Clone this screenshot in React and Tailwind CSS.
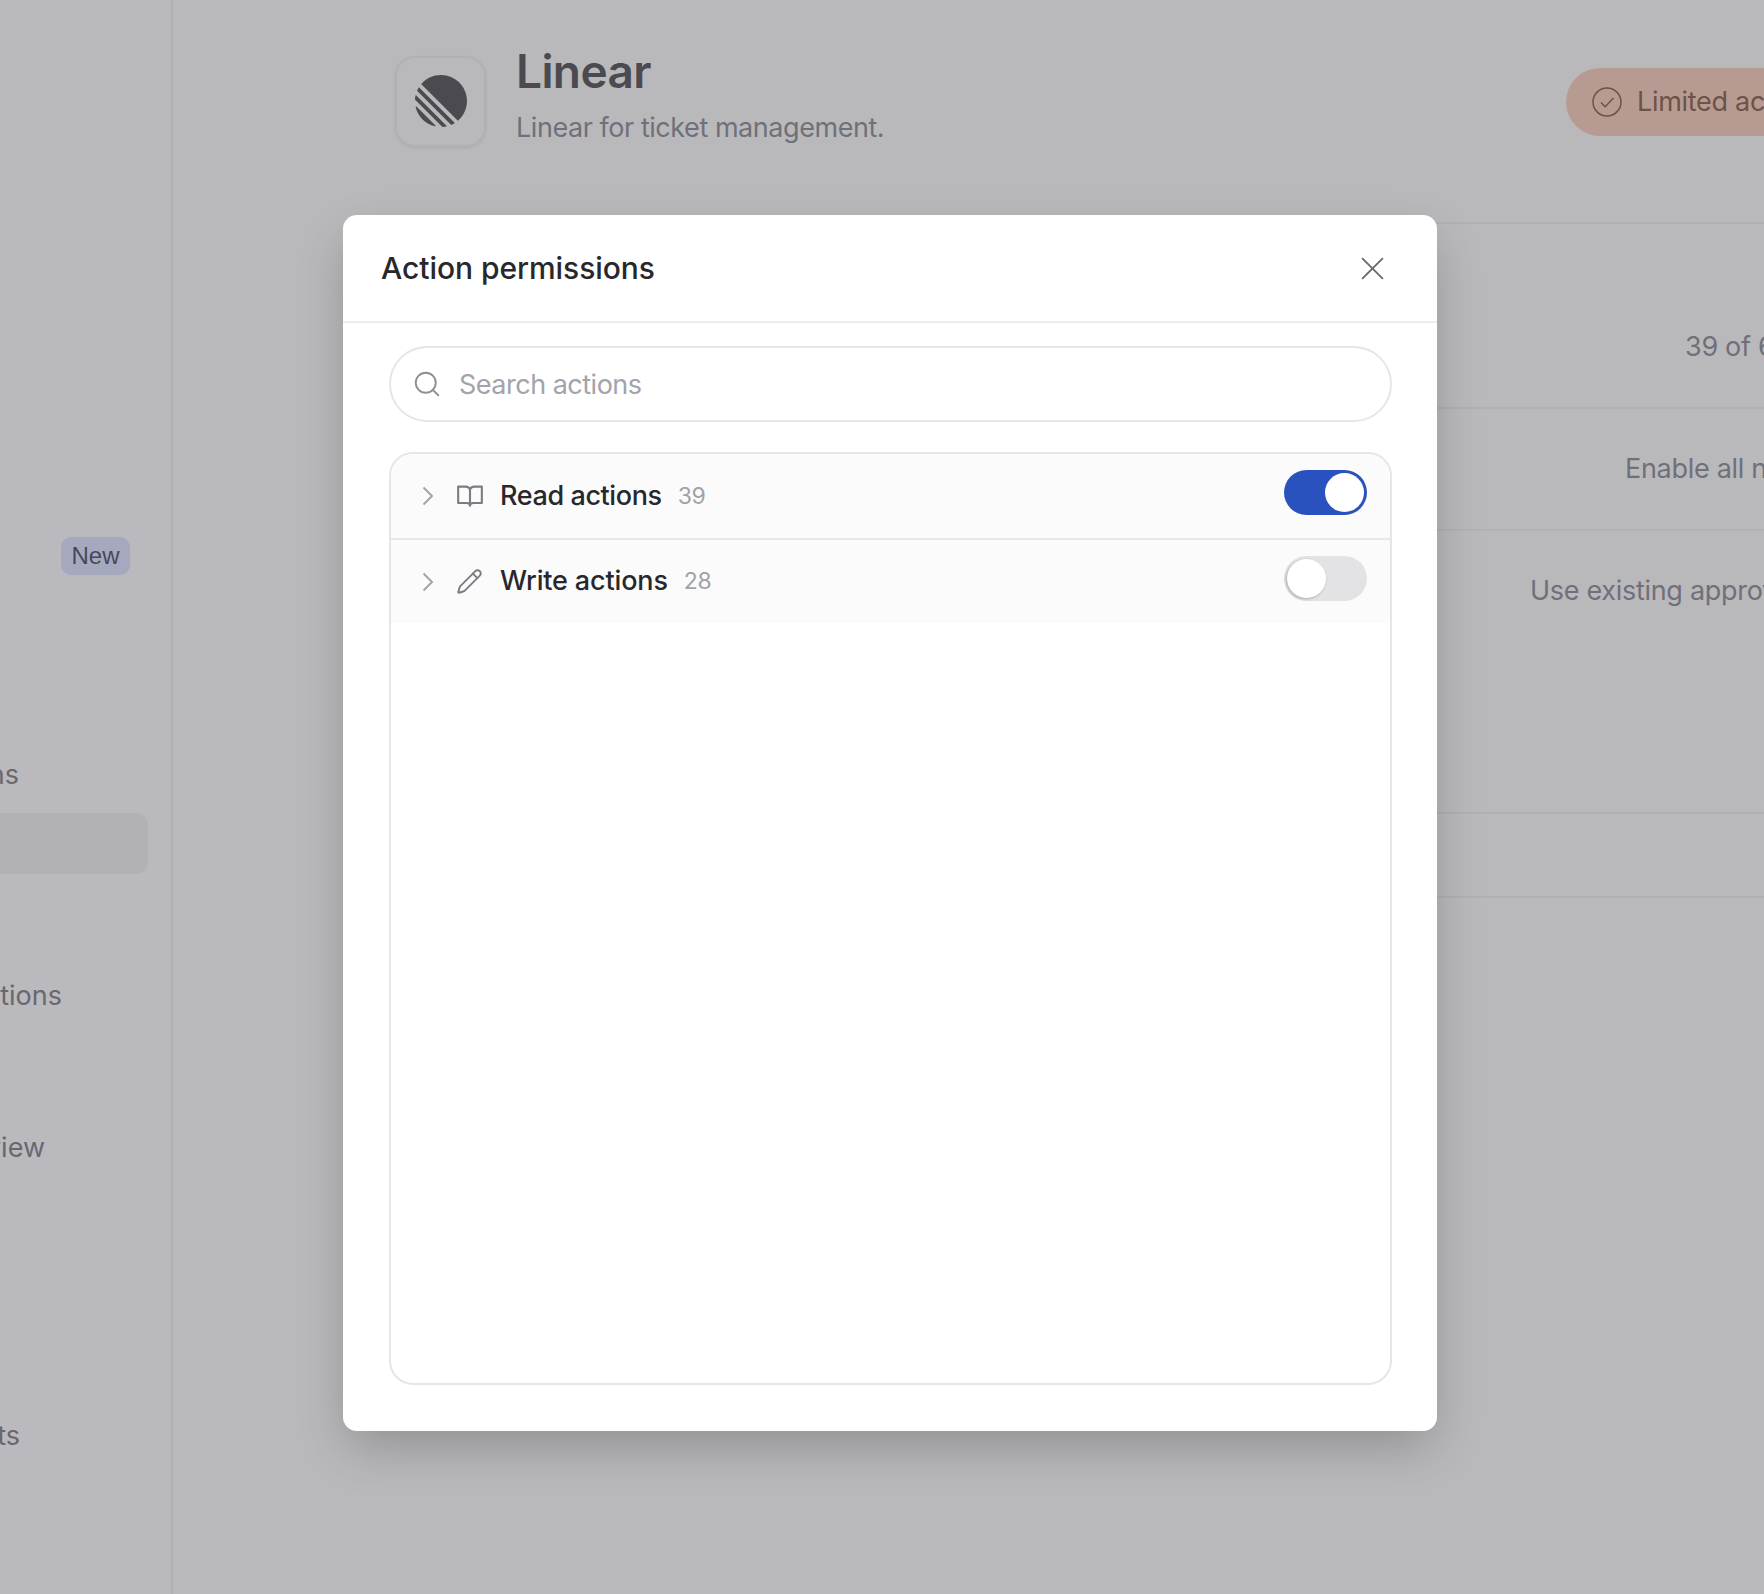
import React from 'react';
import { Pencil, Search } from 'lucide-react';

function LinearLogo() {
  return (
    <svg viewBox="0 0 100 100" className="w-[52px] h-[52px] -mt-[1px]" fill="#4a4a50">
      <path d="M1.22541 61.5228c-.2225-.9485.90748-1.5459 1.59638-.857L39.3342 97.1782c.6889.6889.0915 1.8189-.857 1.5964C20.0515 94.4522 5.54779 79.9485 1.22541 61.5228ZM.00189135 46.8891c-.01764375.2833.08887215.5599.28957165.7606L52.3503 99.7085c.2007.2007.4773.3075.7606.2896 2.3692-.1476 4.6938-.46 6.9624-.9259.7645-.157 1.0301-1.0963.4782-1.6481L2.57595 39.4485c-.55186-.5519-1.49117-.2863-1.648174.4782-.465915 2.2686-.77832 4.5932-.92588465 6.9624ZM4.21093 29.7054c-.16649.3738-.08169.8106.20765 1.1l64.77602 64.776c.2894.2894.7262.3742 1.1.2077 1.7861-.7956 3.5171-1.6927 5.1855-2.684.5521-.328.6373-1.0867.1832-1.5407L8.43566 24.3367c-.45409-.4541-1.21271-.3689-1.54074.1832-.99132 1.6684-1.88843 3.3994-2.68399 5.1855ZM12.6587 18.074c-.3701-.3701-.393-.9637-.0443-1.3541C21.7795 6.45931 35.1114 0 49.9519 0 77.5927 0 100 22.4073 100 50.0481c0 14.8405-6.4593 28.1724-16.7199 37.3375-.3903.3487-.984.3258-1.3542-.0443L12.6587 18.074Z" />
    </svg>
  );
}

function Chevron() {
  return (
    <svg viewBox="0 0 12 20" className="w-3 h-5 shrink-0" fill="none" stroke="#a1a1aa" strokeWidth="1.9">
      <path d="M1.5 1.5 10 10l-8.5 8.5" />
    </svg>
  );
}

function BookIcon() {
  return (
    <svg viewBox="0 0 27 23" className="w-[26px] h-[23px]" fill="none" stroke="#7c7c85" strokeWidth="2.2" strokeLinejoin="round">
      <path d="M13.5 4C12.5 2.2 11.2 1.2 9 1.2H1.2v17h9c1.8 0 3.3.9 3.3 3 0-2.1 1.5-3 3.3-3h9v-17H18c-2.2 0-3.5 1-4.5 2.8Zm0 0v17" />
    </svg>
  );
}

function CheckBadgeIcon() {
  return (
    <svg viewBox="0 0 30 30" className="w-[30px] h-[30px] shrink-0" fill="none" stroke="currentColor" strokeWidth="1.5">
      <circle cx="15" cy="15" r="14" />
      <path d="m9 15.5 4.2 4.2L21.5 11" />
    </svg>
  );
}

function Toggle({ on }) {
  if (on) {
    return (
      <div className="w-[83px] h-[45px] mb-[7px] rounded-full bg-[#2a52be] flex items-center justify-end pr-[3px]">
        <div className="w-[39px] h-[39px] rounded-full bg-white" />
      </div>
    );
  }
  return (
    <div className="w-[83px] h-[45px] mb-[7px] rounded-full bg-[#e3e3e6] flex items-center pl-[3px]">
      <div className="w-[39px] h-[39px] rounded-full bg-white shadow-[-1px_1px_3px_rgba(0,0,0,0.25)]" />
    </div>
  );
}

function ActionRow({ icon, label, count, on, last }) {
  return (
    <div className={`bg-[#fbfbfb] flex items-center pl-[31px] pr-[23px] ${last ? 'h-[83px]' : 'h-[86px] border-b-2 border-[#e8e8ea]'}`}>
      <Chevron />
      <div className="w-[27px] ml-[22px] flex justify-center">{icon}</div>
      <span className={`ml-[17px] text-[27px] font-medium text-[#28282c] ${last ? 'tracking-[-0.15px]' : 'tracking-[-0.4px]'}`}>{label}</span>
      <span className="ml-[16px] text-[23px] text-[#a1a1aa] tracking-[-0.3px]">{count}</span>
      <div className="ml-auto">
        <Toggle on={on} />
      </div>
    </div>
  );
}

function SideRow({ text, cut, className }) {
  return (
    <div className={`flex justify-end text-[27px] leading-8 text-[#68686e] whitespace-nowrap ${cut} ${className}`}>
      {text}
    </div>
  );
}

export default function App() {
  return (
    <div className="relative w-full h-[1594px] overflow-hidden bg-[#b9b9bc] flex font-['Inter',sans-serif]">
      {/* Sidebar, cut off on the left */}
      <aside className="w-[173px] shrink-0 h-full border-r-2 border-[#b0b0b7] bg-[#bab9bd] overflow-hidden pt-[537px]">
        <div className="pl-[61px]">
          <span className="inline-flex items-center justify-center w-[69px] h-[38px] rounded-[10px] bg-[#a6a9bd] text-[#45495f] text-[24px] font-['Liberation_Sans',sans-serif]">New</span>
        </div>
        <SideRow text="Integrations" cut="pr-[152px]" className="mt-[184px]" />
        <div className="mt-[22px] mr-[23px] h-[61px] rounded-r-[12px] bg-[#b2b1b5]" />
        <SideRow text="Automations" cut="pr-[109px]" className="mt-[106px]" />
        <SideRow text="Overview" cut="pr-[126px]" className="mt-[120px]" />
        <SideRow text="Reports" cut="pr-[151px]" className="mt-[256px]" />
      </aside>

      {/* Page behind the dialog */}
      <main className="flex-1 min-w-0 overflow-hidden">
        <div className="w-[1431px] ml-[222px]">
          <div className="flex justify-between pt-[56px] h-[222px]">
            <div className="flex items-start">
              <div className="w-[91px] h-[91px] rounded-[20px] border-2 border-[#b1b1b5] flex items-center justify-center shadow-[0_1px_3px_rgba(0,0,0,0.08)]">
                <LinearLogo />
              </div>
              <div className="ml-[30px] -mt-[13px]">
                <h1 className="text-[46px] leading-[56px] font-semibold text-[#4a4a50] tracking-[-0.6px]">Linear</h1>
                <p className="mt-[13px] text-[27px] leading-8 text-[#70707a] tracking-[-0.45px]">Linear for ticket management.</p>
              </div>
            </div>
            <div className="mt-[12px] h-[68px] w-[260px] rounded-full bg-[#b79b92] text-[#6e5245] flex items-center pl-[26px] gap-[15px] text-[27px] tracking-[-0.3px] whitespace-nowrap">
              <CheckBadgeIcon />
              Limited access
            </div>
          </div>
        </div>
        <div className="text-[27px] leading-8 text-[#70707a] whitespace-nowrap tracking-[-0.3px] w-[1800px] ml-[222px]">
          <div className="h-[187px] border-y-2 border-[#b0b0b5] pt-[107px] pl-[1290px]">39 of 67 actions</div>
          <div className="h-[122px] border-b-2 border-[#b0b0b5] pt-[44px] pl-[1230px]">Enable all new actions</div>
          <div className="h-[283px] border-b-2 border-[#b0b0b5] pt-[44px] pl-[1135px]">Use existing approvals</div>
          <div className="h-[84px] border-b-2 border-[#b0b0b5]" />
        </div>
      </main>

      {/* Dialog */}
      <div className="absolute left-[343px] top-[215px] w-[1094px] h-[1216px] bg-white rounded-[14px] shadow-[0_20px_50px_-5px_rgba(0,0,0,0.22)] flex flex-col">
        <div className="h-[108px] shrink-0 border-b-2 border-[#ececee] flex items-center justify-between pl-[38px] pr-[52px]">
          <h2 className="text-[30px] font-medium text-[#28282c] tracking-[-0.05px]">Action permissions</h2>
          <svg viewBox="0 0 24 24" className="w-[25px] h-[25px]" fill="none" stroke="#6b6b73" strokeWidth="1.8">
            <path d="M2 2l20 20M22 2 2 22" />
          </svg>
        </div>
        <div className="flex-1 min-h-0 flex flex-col pl-[46px] pr-[45px] pt-[23px] pb-[46px]">
          <div className="h-[76px] shrink-0 rounded-full border-2 border-[#e6e6e8] flex items-center pl-[21px]">
            <Search size={30} strokeWidth={1.5} color="#8e8e96" className="shrink-0" />
            <input
              placeholder="Search actions"
              className="ml-[17px] pt-[2px] flex-1 bg-transparent outline-none text-[27px] tracking-[-0.5px] placeholder:text-[#a3a3ab]"
            />
          </div>
          <div className="mt-[30px] flex-1 min-h-0 rounded-[24px] border-2 border-[#e6e6e8] overflow-hidden">
            <ActionRow icon={<BookIcon />} label="Read actions" count="39" on />
            <ActionRow icon={<Pencil size={27} strokeWidth={1.7} color="#7c7c85" />} label="Write actions" count="28" last />
          </div>
        </div>
      </div>
    </div>
  );
}
